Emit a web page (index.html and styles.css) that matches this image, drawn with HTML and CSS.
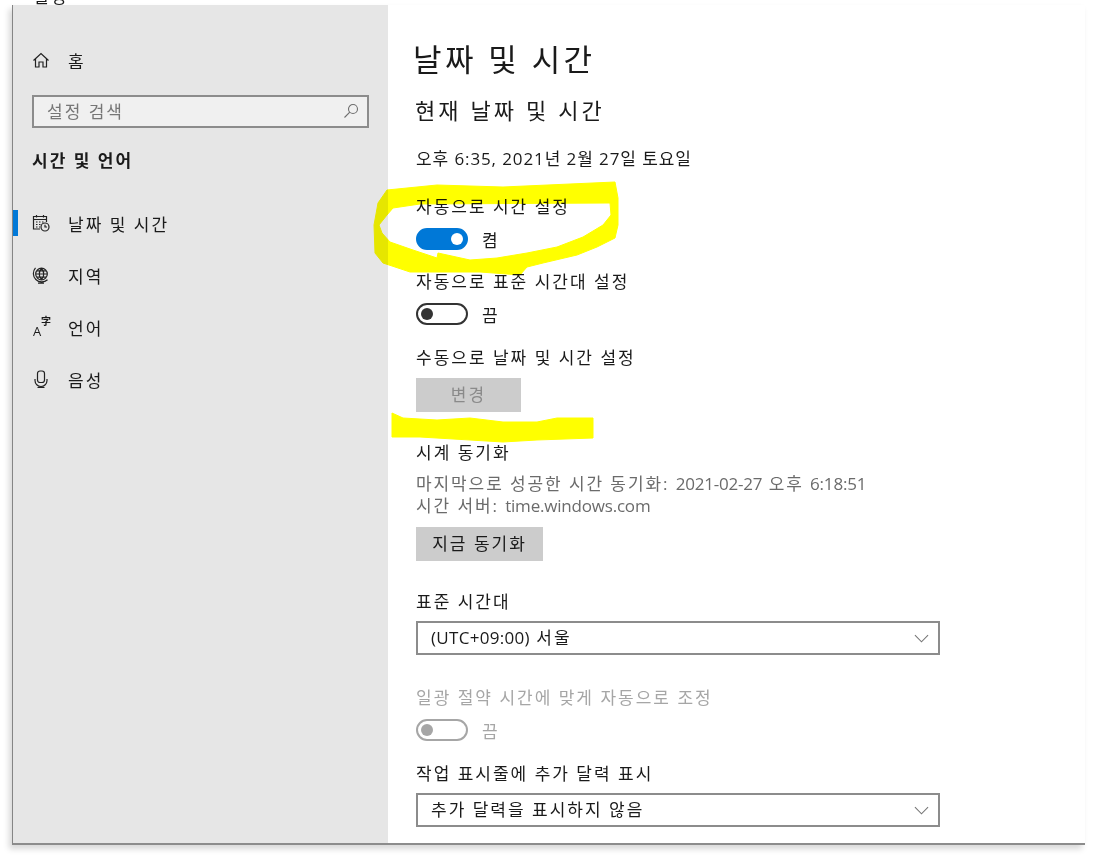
FILE: index.html
```html
<!DOCTYPE html>
<html lang="ko">
<head>
    <meta charset="UTF-8">
    <title>설정</title>
    <link rel="stylesheet" href="styles.css">
</head>
<body>
    <div class="window">
        <!-- 왼쪽 메뉴 -->
        <aside class="sidebar">
            <div class="app-title">설정</div>
            <div class="nav-item home">
                <svg class="icon" viewBox="0 0 18 18"><path d="M1.500 9.500 9 2.500l7.500 7M3.500 8v8h3.500v-5h4v5h3.500V8"/></svg>
                <span>홈</span>
            </div>
            <div class="search">
                <span>설정 검색</span>
                <svg class="search-icon" viewBox="0 0 16 16"><circle cx="10" cy="6" r="4.500"/><path d="M6.800 9.200 1.500 14.500"/></svg>
            </div>
            <div class="nav-title">시간 및 언어</div>
            <div class="nav-item active">
                <svg class="icon" viewBox="0 0 18 18"><path d="M8 15H1.500V2.500h13V8M1.500 5.500h13M4.500 1v2.500M11.500 1v2.500"/><path d="M4 8h1.500M7 8h1.500M10 8h1.500M4 10.500h1.500M7 10.500h1.500M4 13h1.500M7 13h1"/><circle cx="13" cy="13" r="4"/><path d="M13 10.800V13h2"/></svg>
                <span>날짜 및 시간</span>
            </div>
            <div class="nav-item">
                <svg class="icon" viewBox="0 0 18 18"><circle cx="9.500" cy="8" r="5.800"/><path d="M3.500 1.800a8.500 8.500 0 0 0 12 12M9 16v1.200M6 17.200h6"/><path d="M4 8h11M9.500 2.500c-3 3-3 8 0 11M9.500 2.500c3 3 3 8 0 11M5 4.800h9M5 11.200h9"/></svg>
                <span>지역</span>
            </div>
            <div class="nav-item">
                <span class="lang-icon"><span class="lang-a">A</span><span class="lang-han">字</span></span>
                <span>언어</span>
            </div>
            <div class="nav-item">
                <svg class="icon" viewBox="0 0 18 18"><rect x="5.500" y="1" width="7" height="11.500" rx="2.500"/><path d="M3 9v1.500a6 6 0 0 0 12 0V9M9 16.500v1M5.500 17.500h7"/></svg>
                <span>음성</span>
            </div>
        </aside>

        <!-- 본문 -->
        <main class="content">
            <h1>날짜 및 시간</h1>
            <h2>현재 날짜 및 시간</h2>
            <p class="now">오후 6:35, 2021년 2월 27일 토요일</p>

            <div class="group first">
                <div class="label">자동으로 시간 설정</div>
                <div class="toggle-row">
                    <span class="toggle on"></span>
                    <span>켬</span>
                </div>
            </div>

            <div class="group">
                <div class="label">자동으로 표준 시간대 설정</div>
                <div class="toggle-row">
                    <span class="toggle"></span>
                    <span>끔</span>
                </div>
            </div>

            <div class="group manual">
                <div class="label">수동으로 날짜 및 시간 설정</div>
                <button class="btn change" disabled>변경</button>
            </div>

            <div class="group wide">
                <div class="label">시계 동기화</div>
                <div class="info">
                    <div>마지막으로 성공한 시간 동기화: <span class="en">2021-02-27</span> 오후 <span class="en">6:18:51</span></div>
                    <div>시간 서버: <span class="en">time.windows.com</span></div>
                </div>
                <button class="btn sync">지금 동기화</button>
            </div>

            <div class="group wide">
                <div class="label">표준 시간대</div>
                <div class="select">
                    <span><span class="en">(UTC+09:00)</span> 서울</span>
                    <svg class="chevron" viewBox="0 0 16 9"><path d="M1 1l7 7 7-7"/></svg>
                </div>
            </div>

            <div class="group dst disabled">
                <div class="label">일광 절약 시간에 맞게 자동으로 조정</div>
                <div class="toggle-row">
                    <span class="toggle"></span>
                    <span>끔</span>
                </div>
            </div>

            <div class="group last">
                <div class="label">작업 표시줄에 추가 달력 표시</div>
                <div class="select">
                    <span>추가 달력을 표시하지 않음</span>
                    <svg class="chevron" viewBox="0 0 16 9"><path d="M1 1l7 7 7-7"/></svg>
                </div>
            </div>
        </main>
    </div>

    <!-- 노란 형광펜 표시 -->
    <svg class="marker" viewBox="0 0 1105 857">
        <path fill-rule="evenodd" d="M387 190 L437 185 L503 187 L570 184 L615 182 L618 198 L618 225 L615 238 L597 247 L577 255 L543 263 L527 267 L520 275 L480 272 L440 272 L410 272 L383 263 L375 253 L374 225 L378 203 Z M393 208 L387 215 L379 225 L382 233 L390 242 L413 250 L437 258 L438 253 L470 260 L497 258 L527 253 L557 247 L583 237 L603 225 L611 215 L610 203 L420 204 Z"/>
        <path d="M392 413 L403 418 L437 420 L470 418 L503 422 L537 422 L557 418 L593 418 L593 438 L537 440 L503 442 L470 440 L420 437 L392 437 Z"/>
    </svg>
</body>
</html>
```

FILE: styles.css
```css
html, body {
    height: 100%;
}

body {
    margin: 0;
    overflow: hidden;
    background: #fff;
    color: #1a1a1a;
    font-family: "Open Sans", "Noto Sans CJK KR", sans-serif;
    font-size: 17px;
    letter-spacing: 2px;
}

.en {
    letter-spacing: 0.3px;
}

.window {
    display: flex;
    width: 1073px;
    height: 840px;
    margin: 5px 0 0 12px;
    box-sizing: border-box;
    border-left: 1.5px solid #858585;
    border-bottom: 2px solid #8c8c8c;
    box-shadow: -3px 4px 6px #d8d8d8;
    background: #fff;
    filter: blur(0.4px);
}

/* 왼쪽 메뉴 */
.sidebar {
    width: 375px;
    flex-shrink: 0;
    background: #e6e6e6;
}

.app-title {
    margin: -19px 0 0 20px;
    line-height: 22px;
    height: 22px;
}

.nav-item {
    display: flex;
    align-items: center;
    height: 24px;
    margin: 28px 0 0 0;
    padding-left: 19px;
    position: relative;
}

.nav-item > span:last-child {
    margin-left: 18px;
}

.nav-item.home {
    margin-top: 40px;
}

.nav-item.active::before {
    content: "";
    position: absolute;
    left: 0;
    top: -1px;
    width: 5px;
    height: 26px;
    background: #0078d7;
}

.icon {
    width: 18px;
    height: 18px;
    fill: none;
    stroke: #222;
    stroke-width: 1.200;
}

.lang-icon {
    position: relative;
    display: block;
    width: 18px;
    height: 18px;
    letter-spacing: 0;
}

.lang-a {
    position: absolute;
    left: 1px;
    bottom: -2px;
    font-size: 13px;
    line-height: 14px;
}

.lang-han {
    position: absolute;
    left: 9px;
    top: -3px;
    font-size: 10px;
    font-weight: 700;
    line-height: 12px;
}

.search {
    display: flex;
    align-items: center;
    justify-content: space-between;
    height: 33px;
    box-sizing: border-box;
    margin: 23px 19px 0 19px;
    padding: 0 8px 2px 13px;
    border: 2px solid #8c8c8c;
    background: #f0f0f0;
    color: #767676;
}

.search-icon {
    width: 16px;
    height: 16px;
    fill: none;
    stroke: #6e6e6e;
    stroke-width: 1.100;
}

.nav-title {
    margin: 22px 0 39px 19px;
    line-height: 22px;
    font-weight: 700;
}

/* 본문 */
.content {
    flex: 1;
    padding: 32px 0 0 28px;
}

h1 {
    margin: 0 0 0 -3px;
    font-size: 31px;
    font-weight: 400;
    line-height: 44px;
    letter-spacing: 3.400px;
}

h2 {
    margin: 14px 0 0 -1px;
    font-size: 22px;
    font-weight: 400;
    line-height: 30px;
    letter-spacing: 3.100px;
}

.now {
    margin: 23px 0 0 0;
    line-height: 22px;
    letter-spacing: 0.900px;
}

.group {
    margin-top: 21px;
}

.group.first {
    margin-top: 26px;
}

.group.manual {
    margin-top: 22px;
}

.group.wide {
    margin-top: 30px;
}

.group.dst {
    margin-top: 32px;
}

.group.last {
    margin-top: 22px;
}

.label {
    line-height: 22px;
}

.toggle-row {
    display: flex;
    align-items: center;
    gap: 14px;
    height: 22px;
    margin-top: 10px;
}

.toggle {
    position: relative;
    width: 52px;
    height: 22px;
    box-sizing: border-box;
    border: 2px solid #333;
    border-radius: 11px;
}

.toggle::after {
    content: "";
    position: absolute;
    left: 3px;
    top: 3px;
    width: 12px;
    height: 12px;
    border-radius: 50%;
    background: #333;
}

.toggle.on {
    border-color: #0078d7;
    background: #0078d7;
}

.toggle.on::after {
    left: auto;
    right: 3px;
    background: #fff;
}

.disabled {
    color: #a6a6a6;
}

.disabled .toggle {
    border-color: #a6a6a6;
}

.disabled .toggle::after {
    background: #a6a6a6;
}

.btn {
    display: block;
    height: 34px;
    margin-top: 9px;
    padding: 0 0 3px;
    border: 0;
    background: #ccc;
    color: #1a1a1a;
    font: inherit;
    letter-spacing: inherit;
}

.btn.change {
    width: 105px;
    color: #8a8a8a;
}

.btn.sync {
    width: 127px;
    margin-top: 10px;
}

.info {
    margin-top: 9px;
    line-height: 22px;
    color: #6b6b6b;
    letter-spacing: 1.900px;
}

.info .en {
    letter-spacing: -0.200px;
}

.select {
    display: flex;
    align-items: center;
    justify-content: space-between;
    width: 524px;
    height: 34px;
    box-sizing: border-box;
    margin-top: 8px;
    padding: 0 9px 3px 13px;
    border: 2px solid #8c8c8c;
}

.chevron {
    width: 15px;
    height: 9px;
    margin-top: 3px;
    fill: none;
    stroke: #777;
    stroke-width: 1.200;
}

/* 형광펜 */
.marker {
    position: absolute;
    left: 0;
    top: 0;
    width: 1105px;
    height: 857px;
    fill: #ffff00;
    stroke: #ffff00;
    stroke-width: 1;
    stroke-linejoin: round;
    mix-blend-mode: multiply;
    pointer-events: none;
}
```
